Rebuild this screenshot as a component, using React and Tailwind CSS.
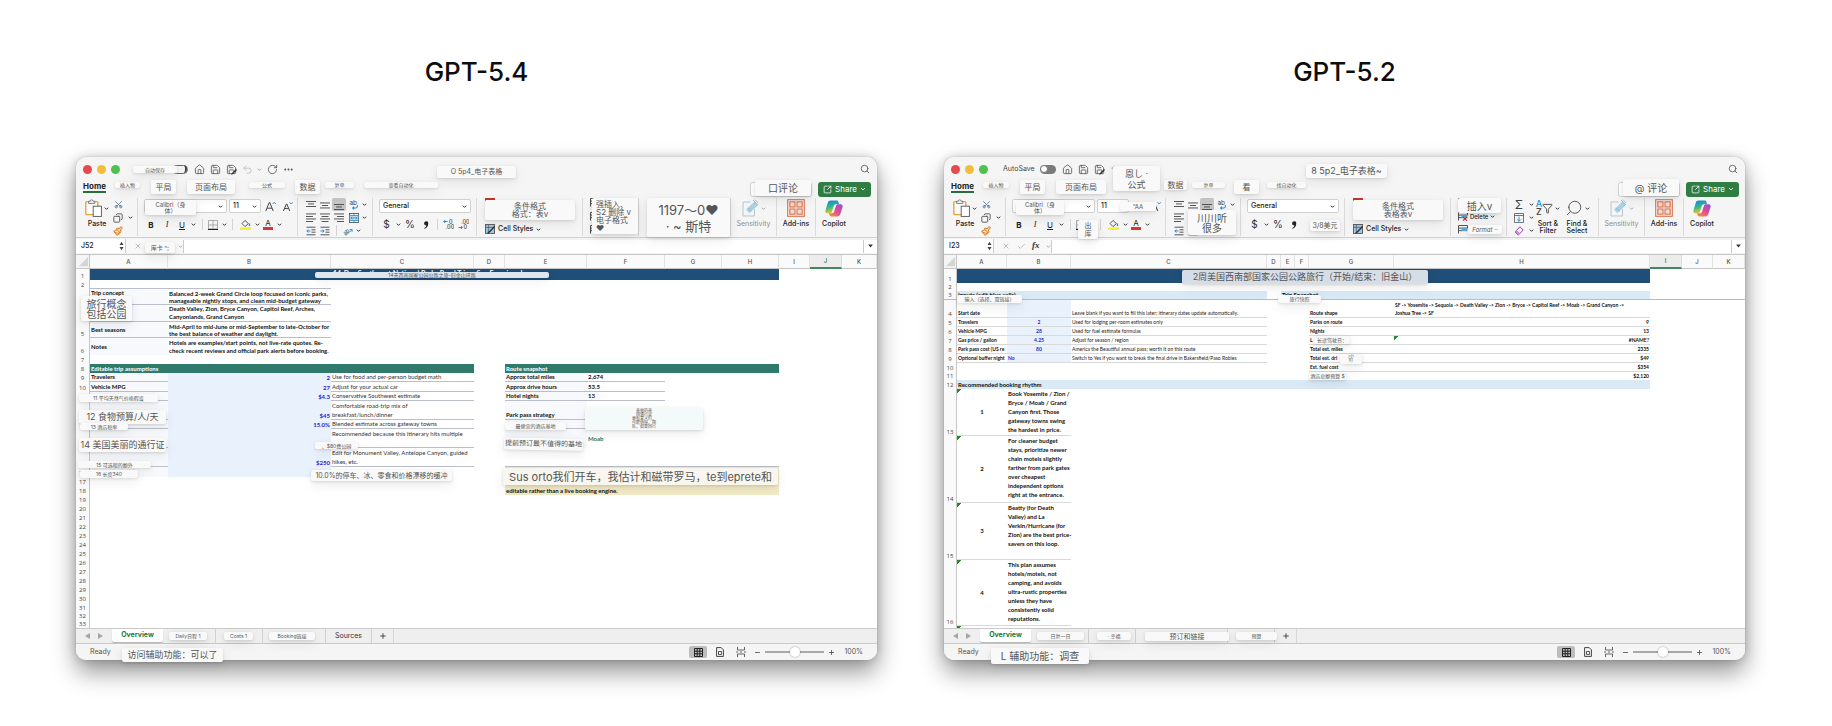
import React from "react";
import {
  House, Save, Undo2, RotateCw, Ellipsis, Search, Scissors, Copy, Paintbrush,
  SquareArrowOutUpRight, X, Check, Plus, Minus, Funnel,
} from "lucide-react";

const cjk = "font-['Inter','Noto_Sans_CJK_SC',sans-serif]";

function Chip({ at, size = "text-[8px] leading-[8px]", tone = "bg-[#f9f9f9]", align = "justify-center text-center", children }) {
  return (
    <span
      className={`absolute z-20 flex items-center overflow-hidden whitespace-pre rounded-[2px] text-[#555] shadow-[0_1px_3px_rgba(0,0,0,0.12),0_4px_12px_rgba(0,0,0,0.08)] ${cjk} ${align} ${tone} ${size} ${at}`}
    >
      <span>{children}</span>
    </span>
  );
}

const tiny = "text-[5px] leading-[6px]";

function Caret({ faint }) {
  return (
    <svg viewBox="0 0 6 6" className={faint ? "size-[5px] shrink-0 text-[#aaa]" : "size-[5px] shrink-0 text-[#333]"} aria-hidden="true">
      <path d="M1 2l2 2 2-2" fill="none" stroke="currentColor" strokeWidth="1.2" />
    </svg>
  );
}

function Tool({ label, w, children }) {
  return (
    <button type="button" aria-label={label} className={`flex h-[13px] shrink-0 items-center justify-center ${w}`}>
      {children}
    </button>
  );
}

const Sep = ({ w = "w-2" }) => (
  <span className={`flex shrink-0 justify-center ${w}`}><span className="h-[11px] w-px bg-[#d4d4d4]" /></span>
);

function Group({ w, children }) {
  return <div className={`flex h-[38px] shrink-0 border-r border-[#dadada] ${w}`}>{children}</div>;
}

function Lines({ rows, color = "#444" }) {
  return (
    <svg viewBox="0 0 10 10" className="size-[10px]" aria-hidden="true">
      {rows.map(([x, y, w], i) => <rect key={i} x={x} y={y} width={w} height="0.9" fill={color} />)}
    </svg>
  );
}

function Indent({ out }) {
  return (
    <svg viewBox="0 0 10 10" className="size-[10px]" fill="none" aria-hidden="true">
      <path d="M0.5 1.2h9M5.5 3.8h4M5.5 6.2h4M0.5 8.8h9" stroke="#444" strokeWidth="0.9" />
      <path d={out ? "M4.5 5H1M2.4 3.4L0.8 5l1.6 1.6" : "M0.5 5H4M2.6 3.4L4.2 5 2.6 6.6"} stroke="#2b8fd0" strokeWidth="1" />
    </svg>
  );
}

function WrapIcon() {
  return (
    <svg viewBox="0 0 10 12" className="h-[11px] w-[10px]" aria-hidden="true">
      <text x="0" y="6" fontSize="7" fontFamily="Inter" fill="#444">ab</text>
      <path d="M8.6 6.5v1.6c0 1-.6 1.6-1.6 1.6H3.4M5 8.2L3.4 9.7 5 11.2" fill="none" stroke="#2b8fd0" strokeWidth="1.1" />
    </svg>
  );
}

function MergeIcon() {
  return (
    <svg viewBox="0 0 10 10" className="size-[10px]" fill="none" aria-hidden="true">
      <rect x="0.5" y="0.5" width="9" height="9" stroke="#444" strokeWidth="0.8" />
      <rect x="0.8" y="2.6" width="8.4" height="4.8" fill="#bfe0f5" stroke="#2b8fd0" strokeWidth="0.8" />
      <path d="M2 5h6M3.3 3.9L2.1 5l1.2 1.1M6.7 3.9L7.9 5 6.7 6.1M5 .5v2M5 7.6v2" stroke="#2b6fa0" strokeWidth="0.7" />
    </svg>
  );
}

function OrientIcon() {
  return (
    <svg viewBox="0 0 11 11" className="size-[10px]" aria-hidden="true">
      <text x="0" y="8" fontSize="6" fontFamily="Inter" fill="#444" transform="rotate(-40 4 6)">ab</text>
      <path d="M3 10.4l7-6.4M7.4 3.8H10v2.6" fill="none" stroke="#2b8fd0" strokeWidth="1" />
    </svg>
  );
}

function PasteIcon() {
  return (
    <svg viewBox="0 0 17 18" className="h-[18px] w-[17px]" fill="none" aria-hidden="true">
      <rect x="0.8" y="2.6" width="12" height="13" rx="1" stroke="#e3a33f" strokeWidth="1.4" fill="#fdfdfd" />
      <path d="M3.6 4.4V2.2h1.6c0-1.8 3-1.8 3 0h1.6v2.2z" fill="#f4f4f4" stroke="#666" strokeWidth="0.8" />
      <rect x="8.2" y="7.2" width="8.2" height="10.2" fill="#fff" stroke="#555" strokeWidth="0.9" />
    </svg>
  );
}

function DecimalIcon({ left }) {
  return (
    <svg viewBox="0 0 11 11" className="size-[11px]" aria-hidden="true">
      <path d={left ? "M4.6 2.5H.8M2.3 1L.8 2.5 2.3 4" : "M.6 8.5h3.8M2.9 7l1.5 1.5L2.9 10"} fill="none" stroke="#2b8fd0" strokeWidth="1" />
      <text x={left ? "6" : "3"} y="5" fontSize="5.5" fontFamily="Inter" fontWeight="500" fill="#444">{left ? "0" : ".00"}</text>
      <text x={left ? "2.6" : "5.6"} y="10.4" fontSize="5.5" fontFamily="Inter" fontWeight="500" fill="#444">{left ? ".00" : "0"}</text>
    </svg>
  );
}

function StyleIcon() {
  return (
    <svg viewBox="0 0 10 10" className="size-[10px]" aria-hidden="true">
      <rect x="0.5" y="0.5" width="9" height="9" fill="#9cc7e6" stroke="#555" strokeWidth="0.9" />
      <path d="M0.5 3.4h9M3.4 .5v9" stroke="#555" strokeWidth="0.7" />
      <path d="M9.6 2.4L5 7.2 2.8 9.2" stroke="#333" strokeWidth="1.5" fill="none" />
    </svg>
  );
}

function FormatIcon() {
  return (
    <svg viewBox="0 0 10 10" className="size-[10px]" aria-hidden="true">
      <rect x="0.5" y="0.5" width="9" height="9" fill="#fff" stroke="#555" strokeWidth="0.9" />
      <rect x="0" y="0" width="10" height="2.2" fill="#c0392b" />
      <rect x="1" y="6" width="8" height="3" fill="#7ab6e0" />
    </svg>
  );
}

function RowsIcon({ hot }) {
  return (
    <svg viewBox="0 0 10 9" className="h-[9px] w-[10px] shrink-0" aria-hidden="true">
      <path d="M.5 8.5V.5h9v2.6H.5M.5 5.6H4" fill="none" stroke="#444" strokeWidth="0.9" />
      <rect x="3.4" y="2.8" width="6" height="3.4" fill="#5aa7de" />
      {hot && <path d="M5 5l4 3.6M9 5L5 8.6" stroke="#c8322b" strokeWidth="1.1" />}
    </svg>
  );
}

function SensitivityIcon() {
  return (
    <svg viewBox="0 0 17 18" className="h-[18px] w-[17px]" fill="none" aria-hidden="true">
      <path d="M8.5 3H1v14h11.5V10" stroke="#b8c6cc" strokeWidth="1" />
      <path d="M4 10.5L12.6 2.6l3.4 3.4-8.6 8.2z" fill="#a9d0e3" />
      <path d="M11 1l5 5M12.8.6l3.4 3.4M6 8.8l3.4 3.4" stroke="#7fb5cf" strokeWidth="0.8" />
    </svg>
  );
}

function AddinsIcon() {
  return (
    <svg viewBox="0 0 18 18" className="size-[18px]" fill="none" stroke="#d9714f" aria-hidden="true">
      <rect x="0.7" y="0.7" width="16.6" height="16.6" strokeWidth="1.1" />
      {[[2.8, 2.8], [10, 2.8], [2.8, 10], [10, 10]].map(([x, y]) => (
        <rect key={`${x}-${y}`} x={x} y={y} width="5.2" height="5.2" strokeWidth="1.1" fill="#f6d9cd" />
      ))}
    </svg>
  );
}

function CopilotIcon({ id }) {
  return (
    <svg viewBox="0 0 18 17" className="h-[17px] w-[18px]" aria-hidden="true">
      <defs>
        <linearGradient id={`${id}a`} x1="0" y1="0" x2="0.3" y2="1">
          <stop offset="0" stopColor="#1b7fe0" /><stop offset="0.55" stopColor="#2fb98a" /><stop offset="1" stopColor="#f2c230" />
        </linearGradient>
        <linearGradient id={`${id}b`} x1="1" y1="0" x2="0.2" y2="1">
          <stop offset="0" stopColor="#8b4fe0" /><stop offset="0.5" stopColor="#e0489b" /><stop offset="1" stopColor="#f58a3c" />
        </linearGradient>
      </defs>
      <path d="M5.6.5h6c1.1 0 1.7.7 2 1.7l.6 2H11c-1.3 0-2 .8-2.4 2L7 11.4c-.4 1.3-1.1 1.9-2.3 1.9H2.5C.8 13.300 0 11.900.5 10.200L2.700 2.900C3.200 1.300 4.100.5 5.600.5z" fill={`url(#${id}a)`} />
      <path d="M12.400 16.500h-6c-1.100 0-1.700-.7-2-1.700l-.5-1.500h2.900c1.300 0 2-.8 2.400-2.100L10.900 6c.4-1.200 1.100-1.800 2.400-1.800h2.200c1.700 0 2.500 1.300 2 3l-2.200 6.900c-.5 1.600-1.400 2.400-2.900 2.400z" fill={`url(#${id}b)`} />
    </svg>
  );
}

function BigTool({ label, icon, w, faint, caret }) {
  return (
    <button type="button" className={`flex flex-col items-center gap-[3px] pt-px text-[7px] leading-[8px] whitespace-nowrap ${w} ${faint ? "text-[#8e8e8e]" : "font-medium text-[#222]"}`}>
      <span className="flex h-[18px] items-center gap-[2px]">{icon}{caret && <Caret faint={faint} />}</span>
      {label}
    </button>
  );
}

function TitleBar({ second }) {
  const icon = "size-[11px] text-[#555]";
  return (
    <div className="flex h-6 items-center pr-[7px] pl-[7px]">
      <div className="flex gap-[5px]">
        <span className="size-[9px] rounded-full bg-[#e5484d]" />
        <span className="size-[9px] rounded-full bg-[#f3be3b]" />
        <span className="size-[9px] rounded-full bg-[#4fc14f]" />
      </div>
      <label className="ml-[15px] flex w-[53px] items-center justify-between text-[7px] text-[#444]">
        {second ? "AutoSave" : <span />}
        <input type="checkbox" aria-label="AutoSave" className="peer sr-only" />
        <span className={`flex h-[9px] w-4 items-center rounded-full ${second ? "bg-[#7b7b7b]" : "justify-end border border-[#666] bg-[#f4f4f4]"}`}>
          <span className={`size-2 rounded-full ${second ? "border border-[#777] bg-white" : "border-r-2 border-[#444]"}`} />
        </span>
      </label>
      <div className="ml-[6px] flex items-center gap-[5px]">
        <button type="button" aria-label="Home page"><House className={icon} strokeWidth={1.8} /></button>
        <button type="button" aria-label="Save"><Save className={icon} strokeWidth={1.8} /></button>
        <button type="button" aria-label="Save as" className="relative">
          <Save className={icon} strokeWidth={1.8} />
          <svg viewBox="0 0 6 6" className="absolute right-0 bottom-0 size-[6px]" aria-hidden="true"><path d="M0 6l1-2 4-4 1 1-4 4z" fill="#333" /></svg>
        </button>
        <button type="button" aria-label="Undo" className="flex items-center gap-1"><Undo2 className="size-[11px] text-[#bbb]" strokeWidth={1.8} /><Caret faint /></button>
        {!second && (
          <>
            <button type="button" aria-label="Redo"><RotateCw className={icon} strokeWidth={1.8} /></button>
            <button type="button" aria-label="More"><Ellipsis className={icon} strokeWidth={2.4} /></button>
          </>
        )}
      </div>
      <button type="button" aria-label="Search" className="ml-auto"><Search className="size-[10px] text-[#555]" strokeWidth={2} /></button>
    </div>
  );
}

function TabBar() {
  return (
    <div className="flex h-4 items-start pr-[6px] pl-[7px]">
      <button type="button" className="border-b-2 border-[#2c6b3f] text-[8px] leading-[10px] font-bold text-[#222]">Home</button>
      <div className="ml-auto flex h-full items-center gap-[6px]">
        <button type="button" aria-label="Comments" className="h-[15px] w-[62px] rounded-[3px] border border-[#d2d2d2] bg-white" />
        <button type="button" className="flex h-[15px] w-[53px] items-center justify-center gap-[3px] rounded-[3px] bg-[#2f7d42] text-[8px] text-white">
          <SquareArrowOutUpRight className="size-[9px]" strokeWidth={2} />Share
          <svg viewBox="0 0 6 6" className="size-[6px]" aria-hidden="true"><path d="M1 2l2 2 2-2" fill="none" stroke="#fff" strokeWidth="0.8" /></svg>
        </button>
      </div>
    </div>
  );
}

function Picker({ label, value, w }) {
  return (
    <label className={`flex h-[14px] items-center rounded-[2px] border border-[#d0d0d0] bg-white pr-[3px] pl-[3px] ${w}`}>
      <select aria-label={label} defaultValue={value} className="min-w-0 flex-1 appearance-none bg-transparent text-[7px] leading-[12px] font-medium text-[#222]">
        <option>{value}</option>
      </select>
      <Caret />
    </label>
  );
}

function FontSizeIcon({ up }) {
  return (
    <svg viewBox="0 0 11 11" className="size-[11px]" fill="none" aria-hidden="true">
      <path d={up ? "M.8 10L4.200 1.500h.6L8.200 10M2.200 7.200h4.800" : "M1.400 10L4.400 3h.4l3 7M2.600 7.600h4"} stroke="#444" strokeWidth="1" />
      <path d={up ? "M7.600 3L9.200 1.300 10.800 3" : "M7.600 1.300L9.200 3l1.600-1.700"} stroke="#2b8fd0" strokeWidth="1" />
    </svg>
  );
}

function Ribbon({ id, second }) {
  return (
    <div className="flex h-[41px] overflow-hidden border-b border-[#cfcfcf] pt-px">
      <Group w="w-[62px]">
        <div className="ml-[8px]"><BigTool label="Paste" icon={<PasteIcon />} w="w-[26px]" caret /></div>
        <div className="ml-[2px] flex flex-col">
          <Tool label="Cut" w="w-[12px]"><Scissors className="size-[9px] -rotate-90 text-[#3d6f95]" strokeWidth={2} /></Tool>
          <div className="flex items-center gap-1">
            <Tool label="Copy" w="w-[12px]"><Copy className="size-[10px] -scale-x-100 text-[#444]" strokeWidth={2} /></Tool>
            <Caret />
          </div>
          <Tool label="Format painter" w="w-[12px]"><Paintbrush className="size-[10px] text-[#e08a2e]" strokeWidth={2.6} /></Tool>
        </div>
      </Group>

      <Group w="w-[160px]">
        <div className="flex flex-col gap-[5px] pt-px pl-[6px]">
          <div className="flex items-center gap-[2px]">
            <Picker label="Font" value=" " w="w-[83px]" />
            <Picker label="Font size" value="11" w="w-[32px]" />
            <Tool label="Increase font size" w="w-[15px]"><FontSizeIcon up /></Tool>
            <Tool label="Decrease font size" w="w-[15px]"><FontSizeIcon /></Tool>
          </div>
          <div className="flex items-center text-[8px] text-[#222]">
            <Tool label="Bold" w="w-[14px]"><b>B</b></Tool>
            <Tool label="Italic" w="w-[18px]"><i className="font-['Liberation_Serif',serif]">I</i></Tool>
            <Tool label="Underline" w="w-[12px]"><u>U</u></Tool>
            <Tool label="Underline style" w="w-[10px]"><Caret /></Tool>
            <Sep />
            <Tool label="Borders" w="w-[14px]">
              <svg viewBox="0 0 10 10" className="size-[10px]" fill="none" aria-hidden="true">
                <path d="M.5.5h9M.5.5v8M9.5.5v8M5 .5v8M.5 5h9" stroke="#999" strokeWidth="0.8" /><path d="M0 9.300h10" stroke="#222" strokeWidth="1.200" />
              </svg>
            </Tool>
            <Tool label="Border style" w="w-[8px]"><Caret /></Tool>
            <Sep />
            <Tool label="Fill colour" w="w-[18px]">
              <svg viewBox="0 0 11 11" className="size-[11px]" fill="none" aria-hidden="true">
                <path d="M2 4.600L5 1.400l3.400 3.200L5 7.600z" stroke="#444" strokeWidth="0.9" /><path d="M9.500 4.500v2.500" stroke="#2b8fd0" strokeWidth="1.300" />
                <rect y="8.400" width="11" height="2.600" fill="#f7ef3a" />
              </svg>
            </Tool>
            <Tool label="Fill options" w="w-[6px]"><Caret /></Tool>
            <Tool label="Font colour" w="w-[16px]">
              <span className="flex h-[11px] w-[10px] items-end justify-center border-b-[3px] border-[#dd3333] text-[8px] leading-[8px]">A</span>
            </Tool>
            <Tool label="Font colour options" w="w-[6px]"><Caret /></Tool>
          </div>
        </div>
      </Group>

      <Group w="w-[75px]">
        <div className="flex flex-col pl-[6px]">
          <div className="flex items-center">
            <Tool label="Align top" w="w-[14px]"><Lines rows={[[0, 1, 10], [2, 3.5, 6], [0, 6, 10]]} /></Tool>
            <Tool label="Align middle" w="w-[14px]"><Lines rows={[[0, 2.5, 10], [2, 5, 6], [0, 7.5, 10]]} /></Tool>
            <span className="rounded-[2px] bg-[#c4c4c4]"><Tool label="Align bottom" w="w-[14px]"><Lines rows={[[0, 4, 10], [2, 6.5, 6], [0, 9, 10]]} /></Tool></span>
            <Tool label="Wrap text" w="w-[16px]"><WrapIcon /></Tool>
            <Caret />
          </div>
          <div className="flex items-center">
            <Tool label="Align left" w="w-[14px]"><Lines rows={[[0, 0.500, 10], [0, 3, 7], [0, 5.500, 10], [0, 8, 7]]} /></Tool>
            <Tool label="Align centre" w="w-[14px]"><Lines rows={[[0, 0.500, 10], [1.500, 3, 7], [0, 5.500, 10], [1.500, 8, 7]]} /></Tool>
            <Tool label="Align right" w="w-[14px]"><Lines rows={[[0, 0.500, 10], [3, 3, 7], [0, 5.500, 10], [3, 8, 7]]} /></Tool>
            <Tool label="Merge" w="w-[16px]"><MergeIcon /></Tool>
            <Caret />
          </div>
          <div className="flex items-center">
            <Tool label="Decrease indent" w="w-[14px]"><Indent out /></Tool>
            <Tool label="Increase indent" w="w-[14px]"><Indent /></Tool>
            {!second && (
              <>
                <Sep />
                <Tool label="Orientation" w="w-[16px]"><OrientIcon /></Tool>
                <Caret />
              </>
            )}
          </div>
        </div>
      </Group>

      <Group w="w-[104px]">
        <div className="flex flex-col gap-[5px] pt-px pl-[6px]">
          <Picker label="Number format" value="General" w="w-[92px]" />
          <div className="flex items-center text-[#333]">
            <Tool label="Currency" w="w-[15px]"><span className="text-[10px]">$</span></Tool>
            <Tool label="Currency options" w="w-[8px]"><Caret /></Tool>
            <Tool label="Percent" w="w-[16px]"><span className="text-[10px]">%</span></Tool>
            <Tool label="Comma style" w="w-[15px]">
              <svg viewBox="0 0 6 8" className="h-2 w-[6px]" aria-hidden="true"><path d="M3 .3a2.100 2.100 0 0 1 2.200 2.400C5.200 5 4 7 1.500 7.800L1.200 7C2.600 6.400 3.300 5.500 3.400 4.500A2.100 2.100 0 1 1 3 .3z" fill="#222" /></svg>
            </Tool>
            {!second && (
              <>
                <Sep />
                <Tool label="Increase decimal" w="w-[15px]"><DecimalIcon left /></Tool>
                <Tool label="Decrease decimal" w="w-[15px]"><DecimalIcon /></Tool>
              </>
            )}
          </div>
        </div>
      </Group>

      <Group w="w-[106px]">
        <div className="flex flex-col justify-between pb-[2px] pl-[8px]">
          <FormatIcon />
          <button type="button" className="flex items-center gap-[3px] text-[7px] leading-[10px] font-medium text-[#222]"><StyleIcon />Cell Styles <Caret /></button>
        </div>
      </Group>

      <Group w="w-[56px]">
        <div className="flex flex-col justify-between pb-[2px] pl-[7px] text-[6px] leading-[9px] font-medium text-[#222]">
          <button type="button" aria-label="Insert"><RowsIcon /></button>
          <button type="button" aria-label="Delete" className="flex items-center gap-[2px]"><RowsIcon hot />{second && <>Delete <Caret /></>}</button>
          <button type="button" aria-label="Format"><RowsIcon /></button>
        </div>
      </Group>

      <Group w="w-[92px]">
        {second && (
          <>
            <div className="flex flex-col pl-[6px]">
              <div className="flex items-center gap-1"><Tool label="AutoSum" w="w-[12px]"><span className="text-[12px] leading-[12px] text-[#444]">Σ</span></Tool><Caret /></div>
              <div className="flex items-center gap-1">
                <Tool label="Fill down" w="w-[12px]">
                  <svg viewBox="0 0 10 10" className="size-[10px]" fill="none" aria-hidden="true"><path d="M.5 .5h9v9h-9zM.5 2.500h9" stroke="#555" strokeWidth="0.8" /><path d="M5 3.600v4.600M3.200 6.500L5 8.300l1.800-1.800" stroke="#2b8fd0" strokeWidth="1" /></svg>
                </Tool>
                <Caret />
              </div>
              <div className="flex items-center gap-1">
                <Tool label="Clear" w="w-[12px]">
                  <svg viewBox="0 0 10 10" className="size-[10px]" fill="none" aria-hidden="true"><path d="M6 .8l3.200 3.200-5 5.200L1 6z" stroke="#a23db5" strokeWidth="1" /><path d="M2.800 4.200L1 6l3.200 3.200L6 7.400z" fill="#c98ad6" /></svg>
                </Tool>
                <Caret />
              </div>
            </div>
            <BigTool
              label={<span className="leading-[7px]">Sort &amp;<br />Filter</span>}
              w="w-[28px]"
              caret
              icon={
                <span className="flex items-center">
                  <span className="flex flex-col text-[9px] leading-[8px]"><span className="text-[#2b8fd0]">A</span><span className="text-[#444]">Z</span></span>
                  <Funnel className="size-[11px] text-[#444]" strokeWidth={2} />
                </span>
              }
            />
            <BigTool label={<span className="leading-[7px]">Find &amp;<br />Select</span>} w="w-[30px]" caret icon={<Search className="size-[18px] -scale-x-100 text-[#555]" strokeWidth={1.300} />} />
          </>
        )}
      </Group>

      <Group w="w-[46px]"><BigTool label="Sensitivity" icon={<SensitivityIcon />} w="w-full" faint caret /></Group>
      <Group w="w-[39px]"><BigTool label="Add-ins" icon={<AddinsIcon />} w="w-full" /></Group>
      <div className="flex w-9 shrink-0 justify-center"><BigTool label="Copilot" icon={<CopilotIcon id={id} />} w="w-full" /></div>
    </div>
  );
}

function FormulaBar({ cell, second }) {
  return (
    <div className="flex h-[17px] items-center border-b border-[#c6c6c6] bg-[#f3f3f3]">
      <label className="flex h-[14px] w-[50px] items-center border-r border-[#ccc] bg-white pr-px pl-[5px]">
        <input aria-label="Name box" defaultValue={cell} className="w-0 min-w-0 flex-1 bg-transparent text-[7px] font-medium text-[#222]" />
        <svg viewBox="0 0 5 10" className="h-[10px] w-[5px]" aria-hidden="true"><path d="M.5 4L2.500.8 4.500 4zM.5 6l2 3.200L4.500 6z" fill="#444" /></svg>
      </label>
      <div className="flex h-[14px] w-[57px] items-center justify-between bg-[#f8f8f8] pl-2">
        <X className="size-2 text-[#aaa]" strokeWidth={2.400} />
        <Check className="size-[9px] text-[#bbb]" strokeWidth={2.400} />
        <span className="font-['Liberation_Serif',serif] text-[9px] font-bold text-[#333] italic">{second ? "fx" : ""}</span>
        <Caret faint />
      </div>
      <input aria-label="Formula" className="h-[13px] min-w-0 flex-1 border-l border-[#ccc] bg-white text-[7px]" />
      <button type="button" aria-label="Expand formula bar" className="flex h-[13px] w-[14px] items-center justify-center border-l border-[#ccc] bg-white">
        <svg viewBox="0 0 6 5" className="h-1 w-[5px]" aria-hidden="true"><path d="M0 .5h6L3 4.500z" fill="#333" /></svg>
      </button>
    </div>
  );
}

const letters = ["A", "B", "C", "D", "E", "F", "G", "H", "I", "J", "K"];

function Sheet({ cols, rows, active, freeze }) {
  return (
    <div className="h-[373px] overflow-hidden bg-white">
      <table className="w-full table-fixed border-separate border-spacing-0 font-['Lato',sans-serif] text-[6px] leading-[8px] text-[#111]">
        <colgroup>{cols.map((c, i) => <col key={i} className={c} />)}</colgroup>
        <thead>
          <tr className="text-[6px] text-[#555]">
            <th className="h-[14px] border-r border-b border-[#c6c6c6] bg-[#f5f5f5] p-0">
              <svg viewBox="0 0 13 13" className="ml-auto size-[11px]" aria-hidden="true"><path d="M12 1v11H1z" fill="#d5d5d5" /></svg>
            </th>
            {letters.map((l) => (
              <th key={l} className={`h-[14px] border-r p-0 font-['Inter',sans-serif] font-medium ${l === active ? "border-b-2 border-r-[#ddd] border-b-[#3d8a5f] bg-[#ececec] text-[#1f7a4d]" : "border-b border-r-[#e2e2e2] border-b-[#c6c6c6] bg-[#fafafa]"}`}>{l}</th>
            ))}
          </tr>
        </thead>
        <tbody>
          {rows.map(([n, h, cells]) => (
            <tr key={n}>
              <th className={`border-r border-r-[#c6c6c6] bg-[#fafafa] p-0 text-center align-bottom font-['Open_Sans',sans-serif] text-[6px] font-normal text-[#444] ${n === freeze ? "border-b border-b-[#bbb]" : ""} ${h}`}>{n}</th>
              {cells.map(([t, c = "", span = 1], i) => (
                <td key={i} colSpan={span} className={`p-0 px-px whitespace-pre ${n === freeze ? "border-b border-[#bbb]" : ""} ${c.includes("align-") ? "" : "align-bottom"} ${c}`}>{t}</td>
              ))}
            </tr>
          ))}
        </tbody>
      </table>
    </div>
  );
}

const ln = "border-b border-[#b9bec9]";
const lab = `font-bold bg-[#f7f9fc] ${ln}`;
const inp = "bg-[#e8f1fc] text-right font-bold text-[#2a1fd0]";
const note = `text-[#333] ${ln}`;
const gap = ["", ""];

const cols1 = ["w-[14px]", "w-[78px]", "w-[163px]", "w-[143px]", "w-[31px]", "w-[82px]", "w-[78px]", "w-[57px]", "w-[57px]", "w-[31px]", "w-[32px]", ""];

const rows1 = [
  [1, "h-[11px]", [["14-Day Southwest National Parks Road Trip – San Francisco Loop", "bg-[#1f4e79] text-center align-top text-[7px] leading-[9px] font-bold text-white", 8], gap, gap, gap]],
  [2, "h-[9px]", [["", ln, 2]]],
  [3, "h-[16px]", [["Trip concept", `${lab} align-top leading-[7px]`], ["Balanced 2-week Grand Circle loop focused on iconic parks,\nmanageable nightly stops, and clean mid-budget gateway", `${ln} font-bold leading-[7px]`]]],
  [4, "h-[17px]", [["", lab], ["Death Valley, Zion, Bryce Canyon, Capitol Reef, Arches,\nCanyonlands, Grand Canyon", `${ln} font-bold`]]],
  [5, "h-[16px]", [["Best seasons", `${lab} align-middle`], ["Mid-April to mid-June or mid-September to late-October for\nthe best balance of weather and daylight.", `${ln} font-bold leading-[7px]`]]],
  [6, "h-[17px]", [["Notes", "bg-[#f7f9fc] font-bold align-middle"], ["Hotels are examples/start points, not live-rate quotes. Re-\ncheck recent reviews and official park alerts before booking.", "font-bold"]]],
  [7, "h-[9px]", []],
  [8, "h-[9px]", [["Editable trip assumptions", "bg-[#2f7a6b] font-bold text-white", 3], gap, ["Route snapshot", "bg-[#2f7a6b] font-bold text-white", 4]]],
  [9, "h-[9px]", [["Travelers", lab], ["2", inp], ["Use for food and per-person budget math", note], gap, ["Approx total miles", lab], ["2,674", `${ln} font-bold`]]],
  [10, "h-[10px]", [["Vehicle MPG", lab], ["27", inp], ["Adjust for your actual car", note], gap, ["Approx drive hours", lab], ["53.5", `${ln} font-bold`]]],
  [11, "h-[9px]", [["", lab], ["$4.3", inp], ["Conservative Southwest estimate", note], gap, ["Hotel nights", lab], ["13", `${ln} font-bold`]]],
  [12, "h-[19px]", [["", lab], ["$45", inp], ["Comfortable road-trip mix of\nbreakfast/lunch/dinner", `${note} leading-[9px]`], gap, ["Park pass strategy", lab]]],
  [13, "h-[9px]", [["", lab], ["15.0%", inp], ["Blended estimate across gateway towns", note], gap, ["", lab]]],
  [14, "h-[19px]", [["", lab], ["", inp], ["Recommended because this itinerary hits multiple", `${note} align-top leading-[9px]`], gap, ["", "bg-[#f7f9fc]"], ["Moab", "align-middle font-bold text-[#2f7a6b]"]]],
  [15, "h-[19px]", [["", lab], ["$250", inp], ["Edit for Monument Valley, Antelope Canyon, guided\nhikes, etc.", `${note} leading-[9px]`], gap, ["", ln, 4]]],
  [16, "h-[10px]", [["", "bg-[#f7f9fc]"], ["", inp], gap, gap, ["", "bg-[#f3ebc6]", 4]]],
  [17, "h-[9px]", [["", "", 4], ["", "bg-[#f3ebc6]", 4]]],
  [18, "h-[9px]", [["", "", 4], ["editable rather than a live booking engine.", "bg-[#f3ebc6] font-bold", 4]]],
  ...["19", "20", "21", "22", "23", "24", "25", "26", "27", "28", "29", "30", "31"].map((n) => [n, "h-[9px]", []]),
  [32, "h-[8px]", []],
  [33, "h-[8px]", []],
];

const cols2 = ["w-[13px]", "w-[50px]", "w-[64px]", "w-[196px]", "w-[14px]", "w-[14px]", "w-[14px]", "w-[85px]", "w-[256px]", "w-[32px]", "w-[31px]", ""];

const ln2 = "border-b border-[#d9d9d9]";
const lab2 = `overflow-hidden text-[5px] font-bold ${ln2}`;
const inp2 = `bg-[#e8f1fc] text-center text-[5px] font-bold text-[#2a1fd0] ${ln2}`;
const note2 = `text-[5px] text-[#222] ${ln2}`;
const val2 = `text-right text-[5px] font-bold ${ln2}`;
const mark = "bg-[linear-gradient(135deg,#2a8a2a_0_3px,transparent_3px)] bg-no-repeat";
const step = `text-center align-middle font-bold ${mark} ${ln2}`;
const tip = `align-top font-bold leading-[9px] ${ln2}`;
const right = (l, v, c = "") => [["", "", 3], [l, lab2], [v, `${val2} ${c}`]];

const rows2 = [
  [1, "h-[14px]", [["", "bg-[#1f4e79]", 8]]],
  [2, "h-[8px]", []],
  [3, "h-[9px]", [["Inputs (edit blue cells)", "bg-[#d9eaf6] font-bold align-top", 3], gap, ["Trip Snapshot", "bg-[#d9eaf6] font-bold align-top", 4], ["", "", 3]]],
  [4, "h-[18px]", [["Start date", lab2], ["", inp2], ["Leave blank if you want to fill this later; itinerary dates update automatically.", note2], ["", "", 3], ["Route shape", lab2], ["SF -> Yosemite -> Sequoia -> Death Valley -> Zion -> Bryce -> Capitol Reef -> Moab -> Grand Canyon ->\nJoshua Tree -> SF", `text-[5px] font-bold ${ln2}`]]],
  [5, "h-[9px]", [["Travelers", lab2], ["2", inp2], ["Used for lodging per-room estimates only", note2], ...right("Parks on route", "9")]],
  [6, "h-[9px]", [["Vehicle MPG", lab2], ["28", inp2], ["Used for fuel estimate formulas", note2], ...right("Nights", "13")]],
  [7, "h-[9px]", [["Gas price / gallon", lab2], ["4.25", inp2], ["Adjust for season / region", note2], ...right("L", "#NAME?", mark)]],
  [8, "h-[9px]", [["Park pass cost (US re", lab2], ["80", inp2], ["America the Beautiful annual pass; worth it on this route", note2], ...right("Total est. miles", "2335")]],
  [9, "h-[9px]", [["Optional buffer night", lab2], ["No", `bg-[#e8f1fc] text-[5px] font-bold text-[#2a1fd0] ${ln2}`], ["Switch to Yes if you want to break the final drive in Bakersfield/Paso Robles", note2], ...right("Total est. dri", "$49")]],
  [10, "h-[9px]", [["", "", 3], ...right("Est. fuel cost", "$354")]],
  [11, "h-[8px]", [["", "", 3], ["", "", 3], ["", "text-[5px]"], ["$2,120", "text-right text-[5px] font-bold"]]],
  [12, "h-[9px]", [["Recommended booking rhythm", "bg-[#d9eaf6] font-bold", 8]]],
  [13, "h-[47px]", [["1", step], ["Book Yosemite / Zion /\nBryce / Moab / Grand\nCanyon first. Those\ngateway towns swing\nthe hardest in price.", tip]]],
  [14, "h-[67px]", [["2", step], ["For cleaner budget\nstays, prioritize newer\nchain motels slightly\nfarther from park gates\nover cheapest\nindependent options\nright at the entrance.", tip]]],
  [15, "h-[57px]", [["3", step], ["Beatty (for Death\nValley) and La\nVerkin/Hurricane (for\nZion) are the best price-\nsavers on this loop.", tip]]],
  [16, "h-[66px]", [["4", step], ["This plan assumes\nhotels/motels, not\ncamping, and avoids\nultra-rustic properties\nunless they have\nconsistently solid\nreputations.", tip]]],
  ["", "h-[2px]", [["", mark]]],
];

function SheetTabs({ tabs }) {
  return (
    <div className="flex h-4 border-t border-b border-[#c9c9c9] bg-[#efefef] text-[7px] text-[#333]">
      <div className="flex w-9 items-center justify-center gap-2">
        <button type="button" aria-label="Previous sheet"><svg viewBox="0 0 5 6" className="h-[6px] w-[5px]" aria-hidden="true"><path d="M5 0v6L0 3z" fill="#a5a5a5" /></svg></button>
        <button type="button" aria-label="Next sheet"><svg viewBox="0 0 5 6" className="h-[6px] w-[5px]" aria-hidden="true"><path d="M0 0v6l5-3z" fill="#a5a5a5" /></svg></button>
      </div>
      <button type="button" className="mb-px w-[51px] rounded-b-[2px] bg-white font-bold text-[#1f7a3d] shadow-[0_1px_1px_rgba(0,0,0,0.25)]">Overview</button>
      {tabs.map(([t, w], i) => (
        <button key={i} type="button" aria-label={t ? undefined : `Sheet ${i + 2}`} className={`border-r border-[#d0d0d0] ${w}`}>{t}</button>
      ))}
      <button type="button" aria-label="Add sheet" className="flex w-[22px] items-center justify-center border-r border-[#d8d8d8]"><Plus className="size-2" strokeWidth={2.600} /></button>
    </div>
  );
}

function StatusBar() {
  return (
    <div className="flex h-4 items-center bg-[#f5f5f5] pr-[14px] pl-[14px] text-[7px] text-[#555]">
      <span>Ready</span>
      <div className="ml-auto flex items-center">
        <button type="button" aria-label="Normal view" className="flex h-3 w-[18px] items-center justify-center rounded-[2px] bg-[#bdbdbd]">
          <svg viewBox="0 0 9 9" className="size-[9px]" aria-hidden="true"><path d="M.5 .5h8v8h-8zM3.200 .5v8M5.800 .5v8M.5 3.200h8M.5 5.800h8" fill="none" stroke="#222" strokeWidth="1" /></svg>
        </button>
        <button type="button" aria-label="Page layout" className="ml-[9px]">
          <svg viewBox="0 0 8 10" className="h-[10px] w-2" fill="none" aria-hidden="true"><path d="M.6 .6h4.600l2.200 2.200v6.600H.6z" stroke="#444" /><path d="M2.500 4.500h3v3h-3z" stroke="#444" strokeWidth="0.9" /></svg>
        </button>
        <button type="button" aria-label="Page break preview" className="ml-3">
          <svg viewBox="0 0 10 10" className="size-[10px]" fill="none" aria-hidden="true"><path d="M1.500 0v3h7V0M1.500 10V7h7v3M0 5h2M4 5h2M8 5h2" stroke="#555" strokeWidth="0.9" /></svg>
        </button>
        <Minus className="ml-2 size-[7px]" strokeWidth={3} />
        <input
          type="range"
          aria-label="Zoom"
          defaultValue="50"
          className="mx-1 h-[10px] w-[59px] appearance-none bg-transparent [&::-webkit-slider-runnable-track]:h-[2px] [&::-webkit-slider-runnable-track]:bg-[#a8a8a8] [&::-webkit-slider-thumb]:-mt-1 [&::-webkit-slider-thumb]:size-[10px] [&::-webkit-slider-thumb]:appearance-none [&::-webkit-slider-thumb]:rounded-full [&::-webkit-slider-thumb]:bg-white [&::-webkit-slider-thumb]:shadow-[0_0_2px_rgba(0,0,0,0.4)]"
        />
        <Plus className="size-[7px]" strokeWidth={3} />
        <span className="ml-[9px]">100%</span>
      </div>
    </div>
  );
}

function Panel({ title, id, second, cell, sheet, tabs, children }) {
  return (
    <section>
      <h2 className="mb-[65px] text-center text-[26px] leading-10 font-medium text-[#0d0d0d]">{title}</h2>
      <div className="relative rounded-[10px] shadow-[0_0_1px_rgba(0,0,0,0.45),0_0_10px_rgba(0,0,0,0.16),0_12px_24px_rgba(0,0,0,0.42)]">
        <div className="overflow-hidden rounded-[10px] bg-[#f5f5f5]">
          <TitleBar second={second} />
          <TabBar />
          <Ribbon id={id} second={second} />
          <FormulaBar cell={cell} second={second} />
          {sheet}
          <SheetTabs tabs={tabs} />
          <StatusBar />
        </div>
        {children}
      </div>
    </section>
  );
}

export default function App() {
  return (
    <main className="grid min-h-screen grid-cols-2 gap-[67px] bg-white pt-[52px] pr-[87px] pb-10 pl-[76px] font-['Inter',sans-serif]">
      <Panel
        title="GPT-5.4"
        id="left"
        cell="J52"
        sheet={<Sheet cols={cols1} rows={rows1} active="J" />}
        tabs={[["", "w-[53px]"], ["", "w-[47px]"], ["", "w-[63px]"], ["Sources", "w-[46px]"]]}
      >
        <Chip at="left-[57px] top-[9px] h-[7px] w-[44px]" size={tiny}>自动保存</Chip>
        <Chip at="left-[361px] top-[9px] h-[12px] w-[79px]" size="text-[7px] leading-[8px]">O 5p4_电子表格</Chip>
        <Chip at="left-[39px] top-[25px] h-[6px] w-[25px]" size={tiny}>插入物</Chip>
        <Chip at="left-[75px] top-[23px] h-[14px] w-[25px]">平局</Chip>
        <Chip at="left-[111px] top-[23px] h-[14px] w-[48px]">页面布局</Chip>
        <Chip at="left-[173px] top-[25px] h-[6px] w-[36px]" size={tiny}>公式</Chip>
        <Chip at="left-[219px] top-[23px] h-[14px] w-[25px]">数据</Chip>
        <Chip at="left-[249px] top-[25px] h-[6px] w-[29px]" size={tiny}>复单</Chip>
        <Chip at="left-[288px] top-[25px] h-[6px] w-[74px]" size={tiny}>查看自动化</Chip>
        <Chip at="right-[66px] top-[23px] h-[16px] w-[56px]" size="text-[10px] leading-[12px]">口评论</Chip>
        <Chip at="left-[69px] top-[43px] h-[15px] w-[51px]" size="text-[6px] leading-[6px]">{"Calibri（身\n体）"}</Chip>
        <Chip at="left-[409px] top-[43px] h-[20px] w-[90px]">{"条件格式\n格式：表v"}</Chip>
        <Chip at="left-[516px] top-[41px] h-[36px] w-[46px]" align="justify-start text-left pl-1">{"强插入、\nS2 删除 v\n电子格式\n♥"}</Chip>
        <Chip at="left-[571px] top-[41px] h-[39px] w-[83px]" size="text-[13px] leading-[16px]">{"1197～0♥\n· ~ 斯特"}</Chip>
        <Chip at="left-[69px] top-[85px] h-[11px] w-[30px]" size="text-[6px] leading-[8px]">库卡 ^;</Chip>
        <Chip at="left-[239px] top-[115px] h-[6px] w-[234px]" size={tiny} tone="bg-[#dde5ee]">14天西南国家公园公路之旅-旧金山环路</Chip>
        <Chip at="left-[5px] top-[139px] h-[25px] w-[51px]" size="text-[10px] leading-[10px]">{"旅行概念\n包括公园"}</Chip>
        <Chip at="left-[3px] top-[237px] h-[8px] w-[79px]" size={tiny}>11 平均天然气价格假设</Chip>
        <Chip at="left-[3px] top-[253px] h-[14px] w-[87px]" size="text-[9px] leading-[12px]">12 食物预算/人/天</Chip>
        <Chip at="left-[4px] top-[266px] h-[7px] w-[48px]" size={tiny}>13 酒店税率</Chip>
        <Chip at="left-[3px] top-[281px] h-[14px] w-[87px]" size="text-[9px] leading-[12px]">14 美国美丽的通行证</Chip>
        <Chip at="left-[2px] top-[304px] h-[7px] w-[73px]" size={tiny}>15 可选租的额外</Chip>
        <Chip at="left-[4px] top-[313px] h-[8px] w-[58px]" size={tiny}>16 长度340</Chip>
        <Chip at="left-[239px] top-[285px] h-[7px] w-[43px]" size={tiny}>、$80费公园</Chip>
        <Chip at="left-[235px] top-[313px] h-[11px] w-[141px]" size="text-[7px] leading-[8px]">10.0%的停车、冰、零食和价格漂移的缓冲</Chip>
        <Chip at="left-[429px] top-[265px] h-[8px] w-[61px]" size={tiny}>最便宜的酒店基地</Chip>
        <Chip at="left-[509px] top-[251px] h-[22px] w-[118px]" size="text-[4px] leading-[4px]" tone="bg-[#f4f9f9]">{"美丽的美\n国通行证\n更有意义时，\n可能值得，国\n队，如果同行"}</Chip>
        <Chip at="left-[428px] top-[281px] h-[12px] w-[79px] rotate-1" size="text-[7px] leading-[8px]">提前预订最不值得的基地</Chip>
        <Chip at="left-[427px] top-[311px] h-[17px] w-[275px]" size="text-[11px] leading-[14px]" tone="bg-[#f8f6ef]">Sus orto我们开车，我估计和磁带罗马，te到eprete和</Chip>
        <Chip at="left-[93px] bottom-[20px] h-[8px] w-[38px]" size={tiny}>Daily日程 1</Chip>
        <Chip at="left-[148px] bottom-[20px] h-[8px] w-[29px]" size={tiny}>Costs 1</Chip>
        <Chip at="left-[193px] bottom-[20px] h-[8px] w-[46px]" size={tiny}>Booking链接</Chip>
        <Chip at="left-[46px] -bottom-[2px] h-[14px] w-[101px]" size="text-[9px] leading-[12px]">访问辅助功能：可以了</Chip>
      </Panel>

      <Panel
        title="GPT-5.2"
        id="right"
        second
        cell="I23"
        sheet={<Sheet cols={cols2} rows={rows2} active="I" freeze={3} />}
        tabs={[["", "w-[58px]"], ["", "w-[47px]"], ["", "w-[92px]"], ["", "w-[47px]"]]}
      >
        <Chip at="left-[169px] top-[9px] h-[25px] w-[47px]" size="text-[9px] leading-[11px]">{"恩し ·\n公式"}</Chip>
        <Chip at="left-[362px] top-[7px] h-[14px] w-[81px]" size="text-[9px] leading-[12px]">8 5p2_电子表格~</Chip>
        <Chip at="left-[39px] top-[25px] h-[6px] w-[26px]" size={tiny}>插入物</Chip>
        <Chip at="left-[76px] top-[23px] h-[14px] w-[25px]">平局</Chip>
        <Chip at="left-[112px] top-[23px] h-[14px] w-[50px]">页面布局</Chip>
        <Chip at="left-[220px] top-[23px] h-[10px] w-[23px]">数据</Chip>
        <Chip at="left-[248px] top-[25px] h-[6px] w-[33px]" size={tiny}>复单</Chip>
        <Chip at="left-[290px] top-[23px] h-[14px] w-[25px]">看</Chip>
        <Chip at="left-[323px] top-[25px] h-[6px] w-[39px]" size={tiny}>找自动化</Chip>
        <Chip at="right-[66px] top-[22px] h-[17px] w-[56px]" size="text-[10px] leading-[12px]">@ 评论</Chip>
        <Chip at="left-[72px] top-[43px] h-[15px] w-[48px]" size="text-[6px] leading-[6px]">{"Calibri（身\n体）"}</Chip>
        <Chip at="left-[176px] top-[45px] h-[9px] w-[36px]" size="text-[6px] leading-[8px]">“AA</Chip>
        <Chip at="left-[134px] top-[63px] h-[19px] w-[20px]" size="text-[7px] leading-[8px]">{"出\n库"}</Chip>
        <Chip at="left-[244px] top-[53px] h-[25px] w-[48px]" size="text-[10px] leading-[10px]">{"川川听\n很多"}</Chip>
        <Chip at="left-[366px] top-[63px] h-[11px] w-[30px]" size="text-[7px] leading-[8px]">3/8美元</Chip>
        <Chip at="left-[409px] top-[43px] h-[20px] w-[90px]">{"条件格式\n表格表v"}</Chip>
        <Chip at="left-[514px] top-[41px] h-[15px] w-[43px]" size="text-[10px] leading-[12px]">插入v</Chip>
        <Chip at="left-[524px] top-[68px] h-[9px] w-[34px]" size="text-[6px] leading-[8px] italic">Format ··</Chip>
        <Chip at="left-[238px] top-[113px] h-[14px] w-[246px]" size="text-[9px] leading-[12px]" tone="bg-[#d5dde7]">2周美国西南部国家公园公路旅行（开始/结束：旧金山）</Chip>
        <Chip at="left-[13px] top-[138px] h-[8px] w-[65px]" size={tiny}>输入（选择、双链接）</Chip>
        <Chip at="left-[334px] top-[138px] h-[8px] w-[43px]" size={tiny}>旅行快照</Chip>
        <Chip at="left-[370px] top-[179px] h-[8px] w-[36px]" size={tiny}>长途驾驶日：</Chip>
        <Chip at="left-[396px] top-[197px] h-[10px] w-[22px]" size="text-[4px] leading-[4px]">{"(小\n时"}</Chip>
        <Chip at="left-[365px] top-[215px] h-[8px] w-[37px]" size={tiny}>酒店总额预算 $</Chip>
        <Chip at="left-[93px] bottom-[20px] h-[8px] w-[47px]" size={tiny}>日复一日</Chip>
        <Chip at="left-[153px] bottom-[20px] h-[8px] w-[34px]" size={tiny}>· 幸福</Chip>
        <Chip at="left-[201px] bottom-[19px] h-[9px] w-[84px]" size="text-[7px] leading-[8px]">预订和链接</Chip>
        <Chip at="left-[292px] bottom-[20px] h-[8px] w-[41px]" size={tiny}>预算</Chip>
        <Chip at="left-[47px] -bottom-[4px] h-[16px] w-[98px]" size="text-[10px] leading-[12px]">L 辅助功能：调查</Chip>
      </Panel>
    </main>
  );
}
